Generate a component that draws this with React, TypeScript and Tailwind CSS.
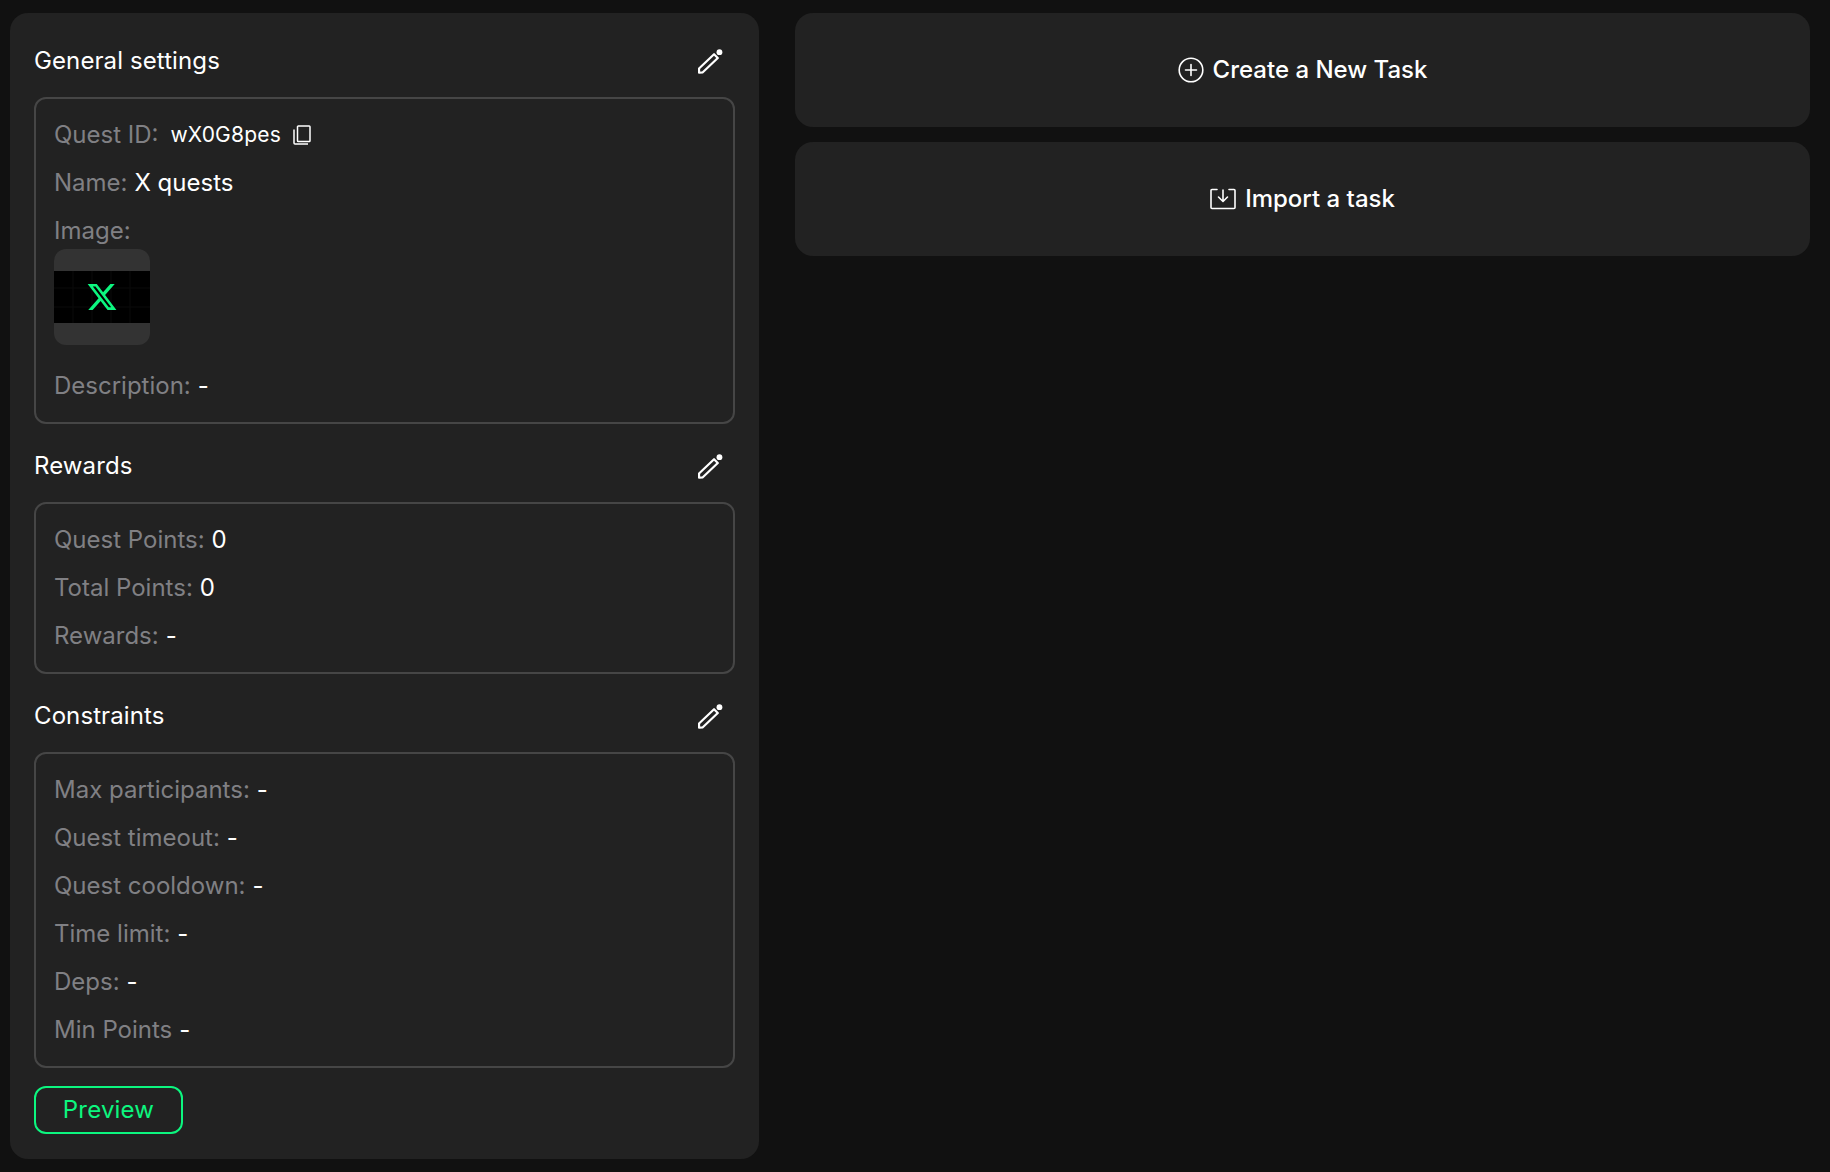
const GREEN = '#0cf67f'

function PencilIcon() {
  return (
    <svg width="25" height="25" viewBox="0 0 24 24" fill="none" stroke="white" strokeWidth="2.1" strokeLinejoin="round">
      <path d="M1 18.8 15.4 5 19 8.600 4.600 22.400 1 22.800Z" />
      <circle cx="20.600" cy="3" r="2.800" fill="white" stroke="none" />
    </svg>
  )
}

function CopyIcon() {
  return (
    <svg width="18" height="20" viewBox="0 0 18 20" fill="none" stroke="white" strokeWidth="1.5">
      <rect x="4.500" y="1" width="12.500" height="15.500" rx="0.800" />
      <path d="M1 4.500V18a1 1 0 0 0 1 1h13" />
    </svg>
  )
}

function PlusCircleIcon() {
  return (
    <svg width="26" height="26" viewBox="0 0 26 26" fill="none" stroke="white" strokeWidth="1.6" strokeLinecap="round">
      <circle cx="13" cy="13" r="11.800" />
      <path d="M13 7.500v11M7.500 13h11" />
    </svg>
  )
}

function ImportIcon() {
  return (
    <svg width="26" height="22" viewBox="0 0 26 22" fill="none" stroke="white" strokeWidth="1.6" strokeLinecap="round" strokeLinejoin="round">
      <path d="M7 1.500H2a1 1 0 0 0-1 1v17a1 1 0 0 0 1 1h22a1 1 0 0 0 1-1v-17a1 1 0 0 0-1-1h-5" />
      <path d="M13 2v11M8.500 9l4.500 4.500L17.500 9" />
    </svg>
  )
}

// quest image: black band with a faint grid behind the green X
function QuestImage() {
  const lines = [19, 38, 57, 76]
  return (
    <svg width="96" height="52" viewBox="0 0 96 52" className="block">
      <rect width="96" height="52" fill="#000" />
      {lines.map((x) => (
        <path key={x} d={`M${x} 0v52`} stroke="#0a0a0a" strokeWidth="1" />
      ))}
      <path d="M0 17h96M0 36h96" stroke="#0a0a0a" strokeWidth="1" />
      <svg x="32" y="10" width="32" height="32" viewBox="0 0 24 24" fill={GREEN}>
        <path d="M18.244 2.25h3.308l-7.227 8.26 8.502 11.24H16.17l-5.214-6.817L4.99 21.75H1.68l7.73-8.835L1.254 2.25H8.08l4.713 6.231zm-1.161 17.52h1.833L7.084 4.126H5.117z" />
      </svg>
    </svg>
  )
}

function Row({ label, value }: { label: string; value: string }) {
  return (
    <div className="h-[28px] flex items-center gap-[7px] leading-[28px]">
      <span className="text-[#808084]">{label}</span>
      <span className="text-white">{value}</span>
    </div>
  )
}

function Section({ title, children }: { title: string; children: React.ReactNode }) {
  return (
    <div>
      <div className="h-[28px] flex items-center justify-between pr-[12px]">
        <h2 className="text-white text-[24px] font-normal tracking-[0.1px]">{title}</h2>
        <button className="text-white"><PencilIcon /></button>
      </div>
      <div className="mt-[22px] border-2 border-[#464646] rounded-[12px] px-[18px] pt-[22px] pb-[22px] flex flex-col gap-[20px]">
        {children}
      </div>
    </div>
  )
}

export default function App() {
  return (
    <div className="w-[1830px] h-[1172px] bg-[#111111] flex items-start gap-[36px] pl-[10px] pr-[20px] pt-[13px] text-[24px] font-['Inter',sans-serif]">
      <div className="w-[749px] h-[1146px] bg-[#222222] rounded-[18px] px-[24px] pt-[34px] flex flex-col gap-[28px]">
        <Section title="General settings">
          <div className="h-[28px] flex items-center">
            <span className="text-[#808084]">Quest ID:</span>
            <span className="text-white text-[21px] tracking-[0.2px] ml-[12px]">wX0G8pes</span>
            <span className="ml-[12px]"><CopyIcon /></span>
          </div>
          <Row label="Name:" value="X quests" />
          <div>
            <Row label="Image:" value="" />
            <div className="mt-[4px] mb-[7px] w-[96px] h-[96px] rounded-[12px] bg-[#333333] flex items-center overflow-hidden">
              <QuestImage />
            </div>
          </div>
          <Row label="Description:" value="-" />
        </Section>
        <Section title="Rewards">
          <Row label="Quest Points:" value="0" />
          <Row label="Total Points:" value="0" />
          <Row label="Rewards:" value="-" />
        </Section>
        <Section title="Constraints">
          <Row label="Max participants:" value="-" />
          <Row label="Quest timeout:" value="-" />
          <Row label="Quest cooldown:" value="-" />
          <Row label="Time limit:" value="-" />
          <Row label="Deps:" value="-" />
          <Row label="Min Points" value="-" />
        </Section>
        <button className="-mt-[10px] w-[149px] h-[48px] rounded-[12px] border-2 border-[#0cf67f] text-[#0cf67f] tracking-[0.2px]">Preview</button>
      </div>
      <div className="flex-1 flex flex-col gap-[15px]">
        <div className="h-[114px] bg-[#222222] rounded-[18px] flex items-center justify-center gap-[9px] text-white font-[450]">
          <PlusCircleIcon />
          <span>Create a New Task</span>
        </div>
        <div className="h-[114px] bg-[#222222] rounded-[18px] flex items-center justify-center gap-[9px] text-white font-[450]">
          <ImportIcon />
          <span>Import a task</span>
        </div>
      </div>
    </div>
  )
}
